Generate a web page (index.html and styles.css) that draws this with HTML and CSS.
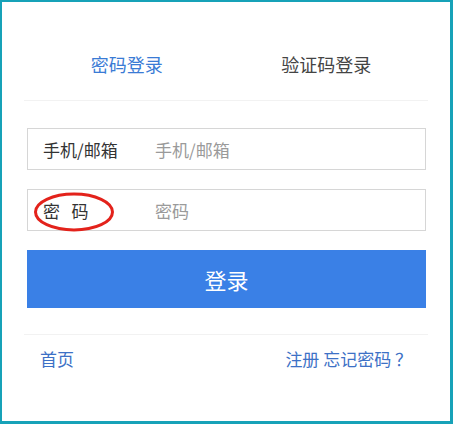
FILE: index.html
```html
<!DOCTYPE html>
<html lang="zh-CN">
<head>
<meta charset="utf-8">
<link rel="stylesheet" href="styles.css">
</head>
<body>
<div class="frame">
  <div class="tabs">
    <div class="tab active">密码登录</div>
    <div class="tab">验证码登录</div>
  </div>
  <div class="rule"></div>
  <div class="form">
    <div class="field">
      <span class="label">手机/邮箱</span>
      <span class="placeholder">手机/邮箱</span>
    </div>
    <div class="field field-pw">
      <span class="label">密&nbsp;&nbsp;&nbsp;码</span>
      <span class="placeholder">密码</span>
      <svg class="circle" width="82" height="42" viewBox="0 0 82 42"><ellipse cx="41" cy="21" rx="38.5" ry="18" fill="none" stroke="#e3221b" stroke-width="3"/></svg>
    </div>
    <div class="btn">登录</div>
  </div>
  <div class="rule rule2"></div>
  <div class="footer">
    <span class="link">首页</span>
    <span class="link">注册 忘记密码 ？</span>
  </div>
</div>
</body>
</html>
```
FILE: styles.css
```css
* { box-sizing: border-box; }
html, body { margin: 0; padding: 0; background: #fff; }
body { font-family: "Microsoft YaHei", "Noto Sans CJK SC", "Noto Sans", sans-serif; }
.frame {
  width: 453px;
  height: 424px;
  border-style: solid;
  border-color: #17a2b8;
  border-width: 2px 3px 3px 2px;
  padding: 0 24px 0 25px;
}
.tabs {
  display: flex;
  padding-top: 47px;
  padding-bottom: 21px;
}
.tab {
  flex: 1;
  text-align: center;
  font-size: 18px;
  line-height: 30px;
  color: #444;
}
.tab.active { color: #3a7bd5; }
.rule {
  height: 1px;
  background: #f2f2f2;
  margin: 0 -2px 0 -3px;
}
.form { padding-top: 27px; }
.field {
  position: relative;
  display: flex;
  align-items: center;
  height: 42px;
  border: 1px solid #d6d6d6;
  padding-left: 15px;
  margin-bottom: 19px;
}
.label {
  width: 112px;
  font-size: 17px;
  color: #333;
}
.placeholder {
  font-size: 17px;
  color: #9a9a9a;
}
.circle {
  position: absolute;
  left: 5px;
  top: 1px;
}
.btn {
  height: 58px;
  background: #3a80e6;
  color: #fff;
  font-size: 22px;
  display: flex;
  align-items: center;
  justify-content: center;
}
.rule2 { margin-top: 26px; }
.footer {
  display: flex;
  justify-content: space-between;
  padding: 10px 14px 0 13px;
}
.link {
  font-size: 17px;
  line-height: 28px;
  color: #3d71c6;
}
```
